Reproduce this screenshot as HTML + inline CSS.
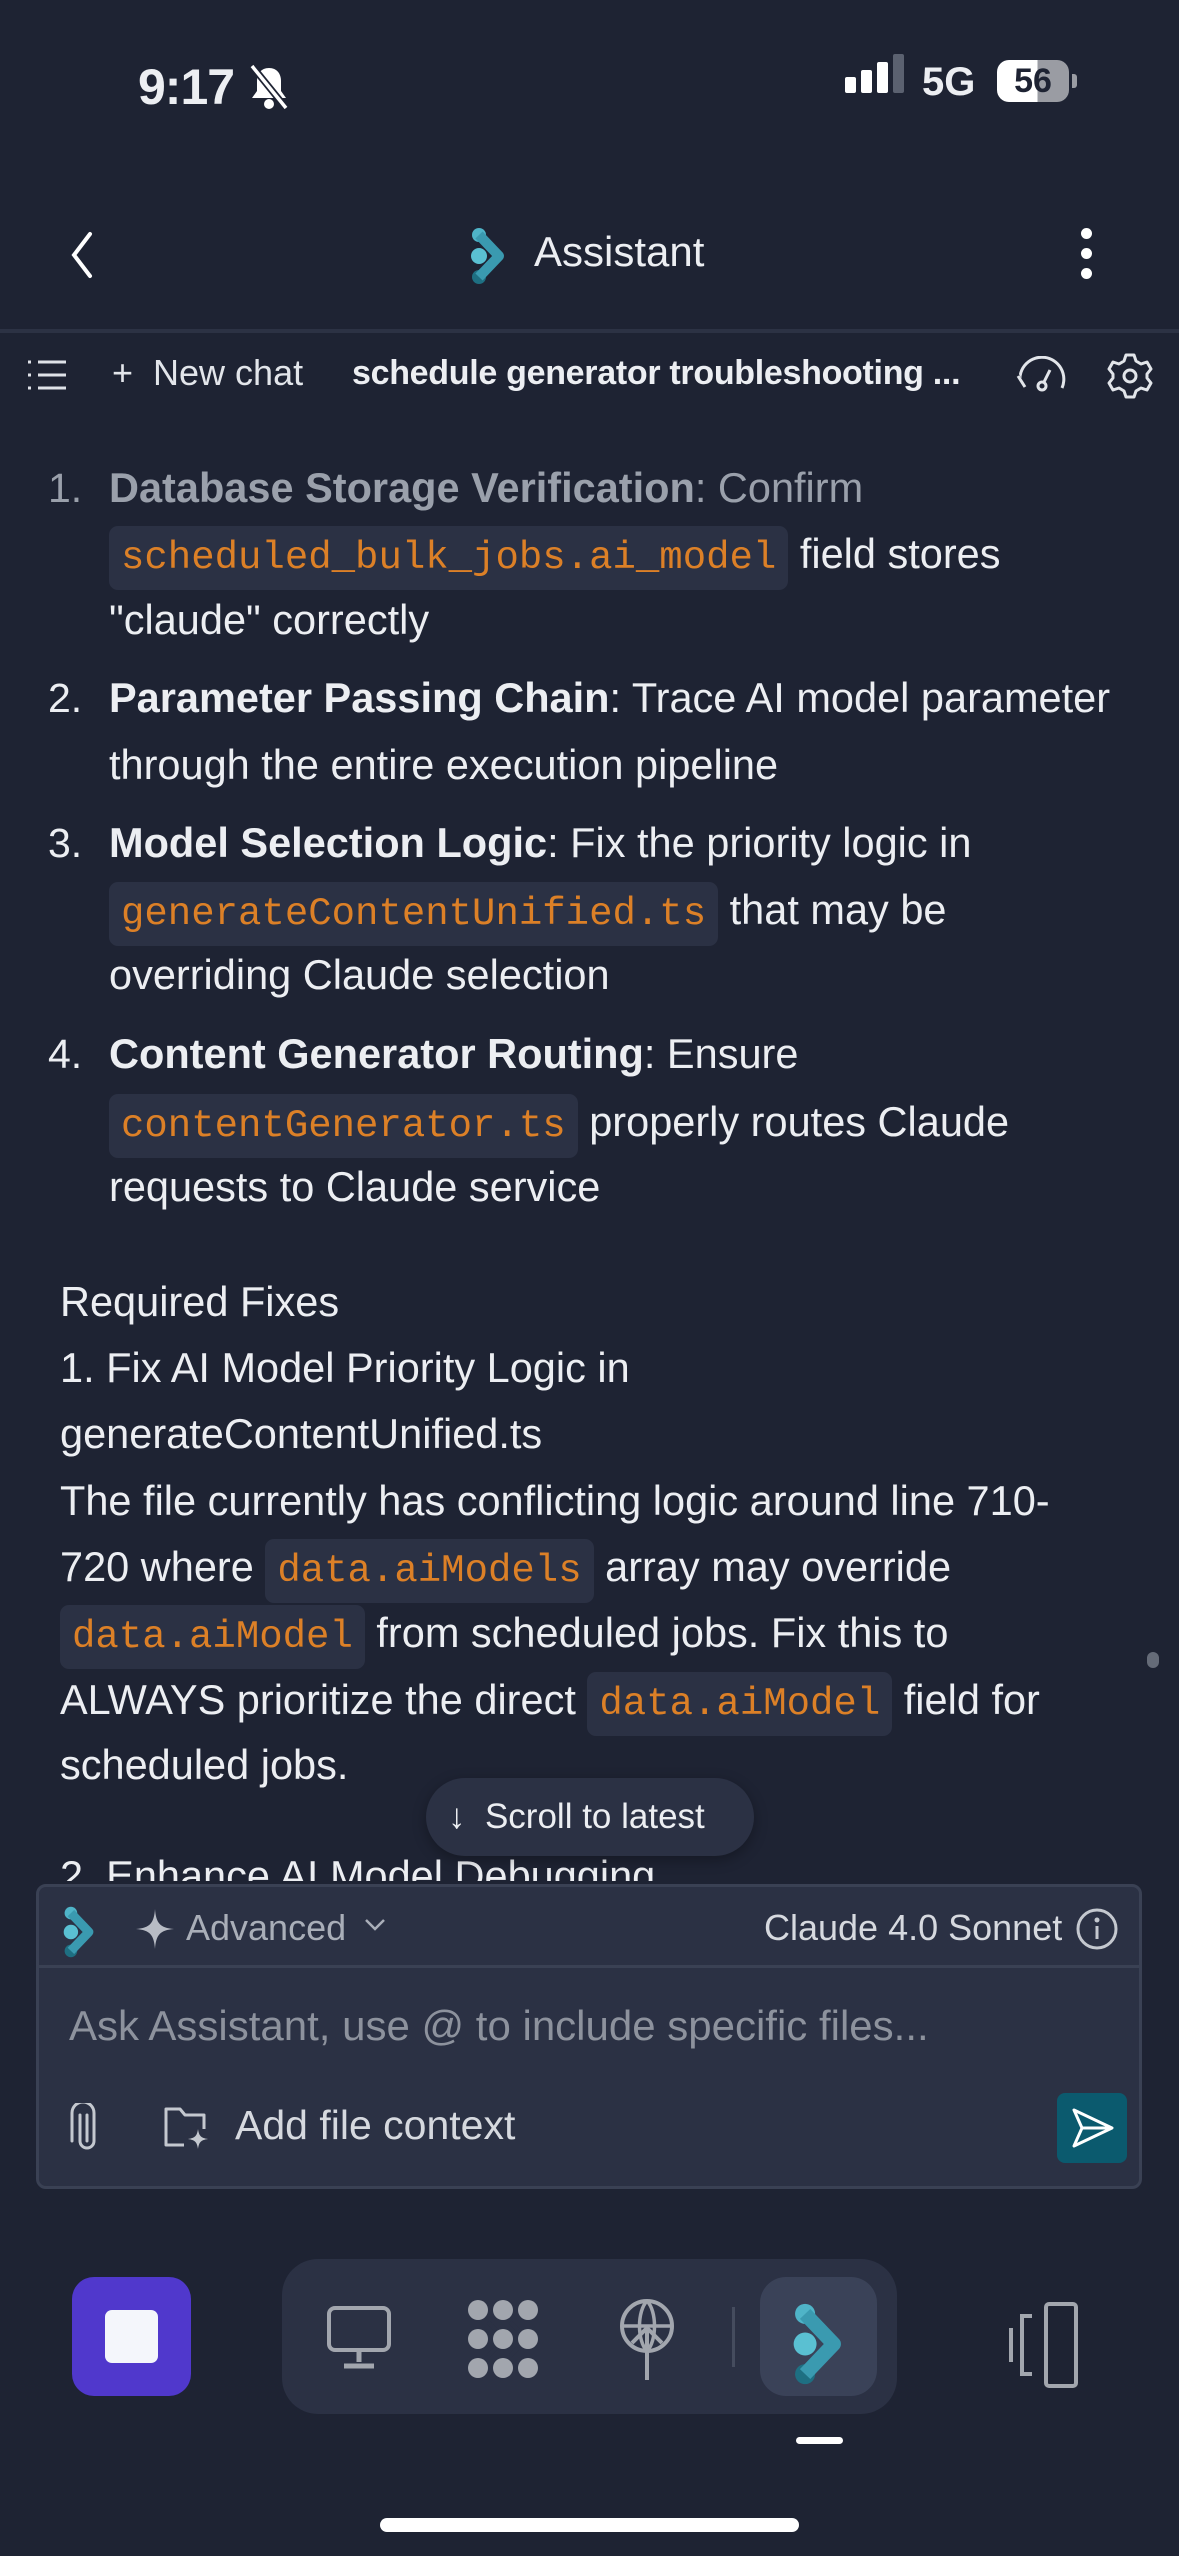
<!DOCTYPE html>
<html><head><meta charset="utf-8">
<style>
*{margin:0;padding:0;box-sizing:border-box}
body{width:1179px;height:2556px;background:#1e2333;position:relative;overflow:hidden;font-family:"Liberation Sans",sans-serif;color:#eceef2}
.a{position:absolute;white-space:nowrap}
.l{position:absolute;white-space:nowrap;font-size:41.5px;line-height:66px;height:66px}
.c{font-family:"Liberation Mono",monospace;color:#dc8027;background:#2b3144;border-radius:9px;padding:10px 12px;font-size:39px}
b{font-weight:bold}
.n{position:absolute;left:48px;font-size:41px;line-height:66px}
</style></head><body>
<!-- status bar -->
<div class="a" style="left:138px;top:58px;font-size:50px;font-weight:bold;letter-spacing:-1px">9:17</div>
<svg class="a" style="left:248px;top:64px" width="42" height="46" viewBox="0 0 42 46"><path d="M21 4c-8 0-12 6-12 13v10l-5 7h34l-5-7V17c0-7-4-13-12-13z" fill="#fff"/><circle cx="21" cy="40" r="5" fill="#fff"/><path d="M4 2l34 42" stroke="#1e2333" stroke-width="7"/><path d="M4 2l34 42" stroke="#fff" stroke-width="3.5"/></svg>
<div class="a" style="left:845px;top:77px;width:11px;height:16px;background:#fff;border-radius:2px"></div>
<div class="a" style="left:861px;top:70px;width:11px;height:23px;background:#fff;border-radius:2px"></div>
<div class="a" style="left:877px;top:62px;width:11px;height:31px;background:#fff;border-radius:2px"></div>
<div class="a" style="left:893px;top:54px;width:11px;height:39px;background:#5b6170;border-radius:2px"></div>
<div class="a" style="left:922px;top:60px;font-size:40px;font-weight:bold">5G</div>
<div class="a" style="left:997px;top:60px;width:72px;height:42px;border-radius:12px;background:linear-gradient(90deg,#fff 0 56%,#9a9ca3 56%);color:#1e2333;font-weight:bold;font-size:34px;text-align:center;line-height:42px">56</div>
<div class="a" style="left:1072px;top:74px;width:5px;height:14px;background:#9a9ca3;border-radius:0 3px 3px 0"></div>
<!-- header -->
<svg class="a" style="left:66px;top:230px" width="30" height="50" viewBox="0 0 30 50"><path d="M24 4L8 25l16 21" stroke="#fff" stroke-width="4" fill="none" stroke-linecap="round"/></svg>
<svg class="a" style="left:470px;top:226px" width="36" height="60" viewBox="0 0 36 60"><circle cx="9" cy="9" r="7" fill="#4fb4c8"/><circle cx="9" cy="30" r="8" fill="#5ac0d2"/><circle cx="9" cy="51" r="7" fill="#1e6f82"/><path d="M9 9L29 30 9 51" stroke="#3a9ab0" stroke-width="10" fill="none" stroke-linejoin="round"/></svg>
<div class="a" style="left:534px;top:228px;font-size:42px">Assistant</div>
<div class="a" style="left:1081px;top:228px;width:11px;height:11px;border-radius:50%;background:#fff"></div>
<div class="a" style="left:1081px;top:248px;width:11px;height:11px;border-radius:50%;background:#fff"></div>
<div class="a" style="left:1081px;top:268px;width:11px;height:11px;border-radius:50%;background:#fff"></div>
<div class="a" style="left:0;top:329px;width:1179px;height:4px;background:#2c3244"></div>
<!-- toolbar -->
<svg class="a" style="left:26px;top:358px" width="42" height="34" viewBox="0 0 42 34"><g stroke="#dfe2e8" stroke-width="3"><path d="M2 4h3M2 17h3M2 30h3M12 4h28M12 17h28M12 30h28"/></g></svg>
<div class="a" style="left:112px;top:352px;font-size:36px;color:#e2e5ea">+&nbsp; New chat</div>
<div class="a" style="left:352px;top:354px;font-size:34px;font-weight:bold;letter-spacing:-0.3px">schedule generator troubleshooting ...</div>
<svg class="a" style="left:1014px;top:356px" width="56" height="40" viewBox="0 0 56 40"><path d="M6 26A22 22 0 1 1 48 32" stroke="#e2e5ea" stroke-width="3" fill="none"/><path d="M2 18l8 14 6-12" stroke="#1e2333" stroke-width="5" fill="none"/><path d="M4 20l7 11" stroke="#e2e5ea" stroke-width="3"/><circle cx="28" cy="30" r="4" stroke="#e2e5ea" stroke-width="3" fill="none"/><path d="M30 26l6-12" stroke="#e2e5ea" stroke-width="3"/></svg>
<svg class="a" style="left:1106px;top:352px" width="48" height="48" viewBox="0 0 48 48"><path d="M20 3h8l2 6 5 3 6-2 4 7-4 5v4l4 5-4 7-6-2-5 3-2 6h-8l-2-6-5-3-6 2-4-7 4-5v-4l-4-5 4-7 6 2 5-3z" stroke="#e2e5ea" stroke-width="3" fill="none" stroke-linejoin="round"/><circle cx="24" cy="24" r="6" stroke="#e2e5ea" stroke-width="3" fill="none"/></svg>
<!-- list -->
<div class="n" style="top:455px;color:#9aa0ab">1.</div>
<div class="l" style="left:109px;top:455px;color:#9aa0ab"><b>Database Storage Verification</b>: Confirm</div>
<div class="l" style="left:109px;top:521px"><span class="c">scheduled_bulk_jobs.ai_model</span> field stores</div>
<div class="l" style="left:109px;top:587px">"claude" correctly</div>
<div class="n" style="top:665px">2.</div>
<div class="l" style="left:109px;top:665px"><b>Parameter Passing Chain</b>: Trace AI model parameter</div>
<div class="l" style="left:109px;top:732px">through the entire execution pipeline</div>
<div class="n" style="top:810px">3.</div>
<div class="l" style="left:109px;top:810px"><b>Model Selection Logic</b>: Fix the priority logic in</div>
<div class="l" style="left:109px;top:877px"><span class="c">generateContentUnified.ts</span> that may be</div>
<div class="l" style="left:109px;top:942px">overriding Claude selection</div>
<div class="n" style="top:1021px">4.</div>
<div class="l" style="left:109px;top:1021px"><b>Content Generator Routing</b>: Ensure</div>
<div class="l" style="left:109px;top:1089px"><span class="c">contentGenerator.ts</span> properly routes Claude</div>
<div class="l" style="left:109px;top:1154px">requests to Claude service</div>
<!-- paragraph -->
<div class="l" style="left:60px;top:1269px">Required Fixes</div>
<div class="l" style="left:60px;top:1335px">1. Fix AI Model Priority Logic in</div>
<div class="l" style="left:60px;top:1401px">generateContentUnified.ts</div>
<div class="l" style="left:60px;top:1468px">The file currently has conflicting logic around line 710-</div>
<div class="l" style="left:60px;top:1534px">720 where <span class="c">data.aiModels</span> array may override</div>
<div class="l" style="left:60px;top:1600px"><span class="c">data.aiModel</span> from scheduled jobs. Fix this to</div>
<div class="l" style="left:60px;top:1667px">ALWAYS prioritize the direct <span class="c">data.aiModel</span> field for</div>
<div class="l" style="left:60px;top:1732px">scheduled jobs.</div>
<div class="l" style="left:60px;top:1843px">2. Enhance AI Model Debugging</div>
<div class="a" style="left:1147px;top:1652px;width:12px;height:16px;border-radius:6px;background:#656b78"></div>
<!-- scroll pill -->
<div class="a" style="left:426px;top:1778px;width:328px;height:78px;border-radius:39px;background:#2b3144;font-size:35px;line-height:78px;padding-left:22px;box-shadow:0 4px 14px rgba(0,0,0,.3)">↓&nbsp;&nbsp;Scroll to latest</div>
<!-- composer -->
<div class="a" style="left:0;top:1881px;width:1179px;height:400px;background:#1e2333"></div>
<div class="a" style="left:36px;top:1884px;width:1106px;height:305px;border-radius:10px;background:#2b3144;border:3px solid #3a4154"></div>
<div class="a" style="left:38px;top:1965px;width:1102px;height:3px;background:#3a4154"></div>
<svg class="a" style="left:62px;top:1905px" width="34" height="54" viewBox="0 0 36 60"><circle cx="9" cy="9" r="7" fill="#4fb4c8"/><circle cx="9" cy="30" r="8" fill="#5ac0d2"/><circle cx="9" cy="51" r="7" fill="#1e6f82"/><path d="M9 9L29 30 9 51" stroke="#3a9ab0" stroke-width="10" fill="none" stroke-linejoin="round"/></svg>
<svg class="a" style="left:136px;top:1909px" width="38" height="40" viewBox="0 0 38 40"><path d="M19 0C20 14 24 19 38 20 24 21 20 26 19 40 18 26 14 21 0 20 14 19 18 14 19 0z" fill="#b8bcc5"/></svg>
<div class="a" style="left:186px;top:1907px;font-size:36px;color:#a9aeb8">Advanced</div>
<svg class="a" style="left:364px;top:1918px" width="22" height="14" viewBox="0 0 22 14"><path d="M2 2l9 9 9-9" stroke="#a9aeb8" stroke-width="2.5" fill="none"/></svg>
<div class="a" style="left:764px;top:1907px;font-size:36px;color:#d6d9df">Claude 4.0 Sonnet</div>
<svg class="a" style="left:1075px;top:1907px" width="44" height="44" viewBox="0 0 44 44"><circle cx="22" cy="22" r="19" stroke="#c4c8cf" stroke-width="3" fill="none"/><circle cx="22" cy="13" r="2.5" fill="#c4c8cf"/><path d="M22 19v13" stroke="#c4c8cf" stroke-width="3"/></svg>
<div class="a" style="left:69px;top:2002px;font-size:42px;color:#8d929d">Ask Assistant, use @ to include specific files...</div>
<svg class="a" style="left:70px;top:2103px" width="34" height="50" viewBox="0 0 34 50"><path d="M10 12v26a7 7 0 0 0 14 0V10a11 11 0 0 0-22 0v28" stroke="#c4c8cf" stroke-width="3" fill="none" stroke-linecap="round"/><path d="M17 12v26" stroke="#c4c8cf" stroke-width="3" stroke-linecap="round"/></svg>
<svg class="a" style="left:162px;top:2105px" width="50" height="46" viewBox="0 0 50 46"><path d="M22 40H4V4h14l5 6h19v14" stroke="#c4c8cf" stroke-width="3" fill="none" stroke-linejoin="round"/><path d="M36 24c1 7 3 9 10 10-7 1-9 3-10 10-1-7-3-9-10-10 7-1 9-3 10-10z" fill="#c4c8cf"/></svg>
<div class="a" style="left:235px;top:2102px;font-size:41px;color:#d6d9df">Add file context</div>
<div class="a" style="left:1057px;top:2093px;width:70px;height:70px;border-radius:8px;background:#0b5a6e"></div>
<svg class="a" style="left:1070px;top:2106px" width="46" height="44" viewBox="0 0 46 44"><path d="M4 4l38 18L4 40l8-18z M12 22h30" stroke="#fff" stroke-width="3" fill="none" stroke-linejoin="round"/></svg>
<!-- bottom nav -->
<div class="a" style="left:72px;top:2277px;width:119px;height:119px;border-radius:22px;background:#5038cc"></div>
<div class="a" style="left:105px;top:2310px;width:53px;height:53px;border-radius:7px;background:#f4f6fb"></div>
<div class="a" style="left:282px;top:2259px;width:615px;height:155px;border-radius:36px;background:#2b3144"></div>
<div class="a" style="left:760px;top:2277px;width:117px;height:119px;border-radius:26px;background:#3a4258"></div>
<svg class="a" style="left:326px;top:2305px" width="66" height="66" viewBox="0 0 66 66"><rect x="3" y="3" width="60" height="42" rx="6" stroke="#a2a6ae" stroke-width="4" fill="none"/><path d="M33 45v12M18 61h30" stroke="#a2a6ae" stroke-width="5"/></svg>
<svg class="a" style="left:466px;top:2300px" width="74" height="78" viewBox="0 0 74 78"><g fill="#a2a6ae"><circle cx="12" cy="10" r="10"/><circle cx="37" cy="10" r="10"/><circle cx="62" cy="10" r="10"/><circle cx="12" cy="39" r="10"/><circle cx="37" cy="39" r="10"/><circle cx="62" cy="39" r="10"/><circle cx="12" cy="68" r="10"/><circle cx="37" cy="68" r="10"/><circle cx="62" cy="68" r="10"/></g><path d="M22 22l8 8M44 22l8 8M22 56l8-8M44 56l8-8" stroke="#2b3144" stroke-width="4"/></svg>
<svg class="a" style="left:618px;top:2298px" width="58" height="84" viewBox="0 0 58 84"><circle cx="29" cy="28" r="25" stroke="#a2a6ae" stroke-width="4" fill="none"/><path d="M4 28h50M29 3c-10 10-10 40 0 50M29 3c10 10 10 40 0 50" stroke="#a2a6ae" stroke-width="3.5" fill="none"/><path d="M29 82V30M14 45l15-15 15 15" stroke="#a2a6ae" stroke-width="4" fill="none"/></svg>
<div class="a" style="left:732px;top:2307px;width:3px;height:60px;background:#454c5e"></div>
<svg class="a" style="left:792px;top:2301px" width="52" height="86" viewBox="0 0 36 60"><circle cx="9" cy="9" r="7" fill="#4fb4c8"/><circle cx="9" cy="30" r="8" fill="#5ac0d2"/><circle cx="9" cy="51" r="7" fill="#1e6f82"/><path d="M9 9L29 30 9 51" stroke="#3a9ab0" stroke-width="10" fill="none" stroke-linejoin="round"/></svg>
<svg class="a" style="left:1008px;top:2300px" width="74" height="90" viewBox="0 0 74 90"><path d="M3 28v34" stroke="#a2a6ae" stroke-width="4"/><path d="M24 16h-10v58h10" stroke="#a2a6ae" stroke-width="4" fill="none"/><rect x="38" y="4" width="30" height="82" rx="3" stroke="#a2a6ae" stroke-width="4" fill="none"/></svg>
<div class="a" style="left:796px;top:2437px;width:47px;height:7px;border-radius:4px;background:#fff"></div>
<div class="a" style="left:380px;top:2518px;width:419px;height:14px;border-radius:7px;background:#fff"></div>
</body></html>
